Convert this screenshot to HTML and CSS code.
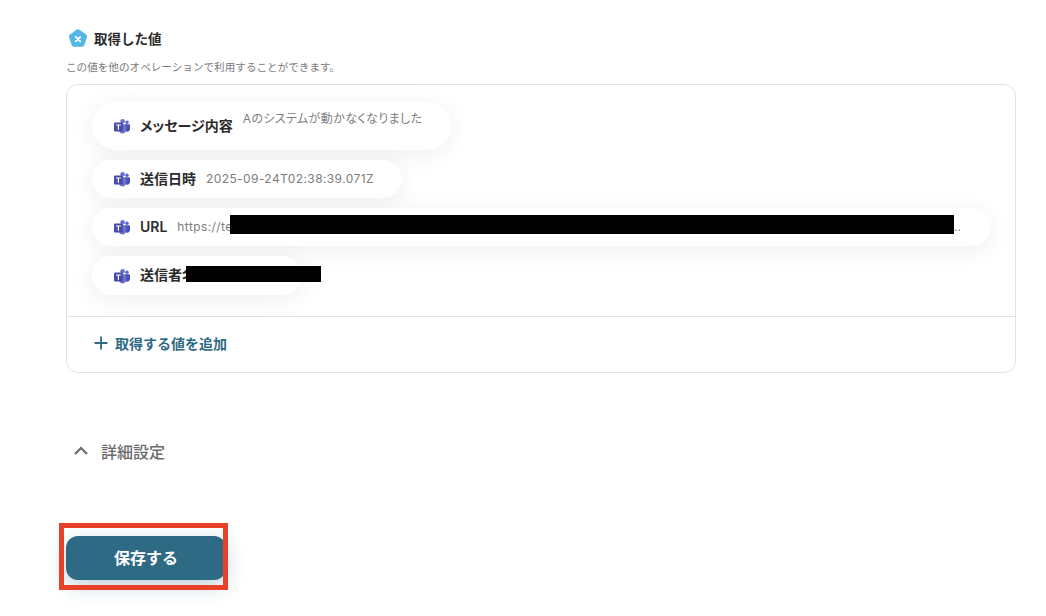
FILE: index.html
```html
<!DOCTYPE html>
<html lang="ja">
<head>
    <meta charset="UTF-8">
    <meta name="viewport" content="width=device-width, initial-scale=1.0">
    <title>取得した値</title>
    <link rel="stylesheet" href="styles.css">
</head>
<body>
    <svg width="0" height="0" class="defs">
        <symbol id="teams" viewBox="0 0 16 16">
            <circle cx="13" cy="4.200" r="1.700" fill="#5f66c4"/>
            <circle cx="8.600" cy="3.200" r="2.300" fill="#6a71cf"/>
            <path d="M11 6.300h4.200c.4 0 .8.400.8.800v4c0 1.500-1.200 2.600-2.600 2.600-.9 0-1.700-.4-2.400-1z" fill="#4a52b5"/>
            <path d="M5 6.300h6.400c.3 0 .6.300.6.600v5.300c0 1.900-1.500 3.300-3.500 3.300-1.900 0-3.500-1.400-3.500-3.300z" fill="#6a71cf"/>
            <rect x="0" y="4.600" width="8.800" height="8.800" rx="1" fill="#454da8"/>
            <path d="M2 6.600h4.800v1H5v4.200H3.800V7.600H2z" fill="#fff"/>
        </symbol>
    </svg>

    <section class="values">
        <div class="values-title">
            <svg class="badge" width="20" height="20" viewBox="0 0 20 20">
                <path d="M8.500 .8a2.500 2.500 0 0 1 3 0l6.500 4.800a2.500 2.500 0 0 1 .9 2.800l-2.500 7.700a2.500 2.500 0 0 1-2.400 1.700H6a2.500 2.500 0 0 1-2.400-1.700L1.100 8.400A2.500 2.500 0 0 1 2 5.600z" fill="#53b7e8"/>
                <path d="M7.800 8l4.400 4.400M12.200 8l-4.400 4.400" stroke="#fff" stroke-width="1.800" stroke-linecap="round"/>
            </svg>
            <h2>取得した値</h2>
        </div>
        <p class="values-note">この値を他のオペレーションで利用することができます。</p>

        <div class="card">
            <div class="pill-list">
                <div class="pill pill-tall">
                    <svg class="teams-icon"><use href="#teams"/></svg>
                    <span class="pill-label">メッセージ内容</span>
                    <span class="pill-value pill-value-raised">Aのシステムが動かなくなりました</span>
                </div>
                <div class="pill pill-date">
                    <svg class="teams-icon"><use href="#teams"/></svg>
                    <span class="pill-label">送信日時</span>
                    <span class="pill-value">2025-09-24T02:38:39.071Z</span>
                </div>
                <div class="pill pill-url">
                    <svg class="teams-icon"><use href="#teams"/></svg>
                    <span class="pill-label">URL</span>
                    <span class="pill-value">https://te</span>
                    <span class="pill-dots">..</span>
                    <div class="redact redact-url"></div>
                </div>
                <div class="pill pill-sender">
                    <svg class="teams-icon"><use href="#teams"/></svg>
                    <span class="pill-label">送信者名</span>
                    <div class="redact redact-sender"></div>
                </div>
            </div>
            <div class="card-footer">
                <svg width="14" height="14" viewBox="0 0 14 14">
                    <path d="M7 .5v13M.5 7h13" stroke="#2f6a85" stroke-width="1.800"/>
                </svg>
                <span>取得する値を追加</span>
            </div>
        </div>
    </section>

    <div class="details">
        <svg width="16" height="10" viewBox="0 0 16 10">
            <path d="M2 8l6-6 6 6" fill="none" stroke="#6b6b6b" stroke-width="2.200"/>
        </svg>
        <span>詳細設定</span>
    </div>

    <div class="save-wrap">
        <button class="save-button">保存する</button>
        <div class="highlight"></div>
    </div>
</body>
</html>
```

FILE: styles.css
```css
body {
    margin: 0;
    padding: 29px 30px 0 66px;
    box-sizing: border-box;
    height: 616px;
    overflow: hidden;
    background-color: #fff;
    font-family: Inter, 'Noto Sans CJK JP', sans-serif;
    color: #2b2b2b;
}

.defs {
    position: absolute;
}

.values-title {
    display: flex;
    align-items: center;
    gap: 6px;
    height: 20px;
    margin-left: 2px;
}

.values-title h2 {
    margin: 0;
    font-size: 13.5px;
    font-weight: 600;
    line-height: 20px;
}

.values-note {
    margin: 11px 0 0;
    font-size: 10.6px;
    line-height: 16px;
    color: #7a7a7a;
}

.card {
    margin-top: 8px;
    width: 950px;
    height: 289px;
    box-sizing: border-box;
    border: 1px solid #e2e2e2;
    border-radius: 12px;
    display: flex;
    flex-direction: column;
}

.pill-list {
    box-sizing: border-box;
    height: 232px;
    padding: 17px 0 0 25px;
    display: flex;
    flex-direction: column;
    align-items: flex-start;
    gap: 10px;
    border-bottom: 1px solid #e2e2e2;
}

.pill {
    position: relative;
    height: 38px;
    box-sizing: border-box;
    padding-left: 22px;
    display: flex;
    align-items: center;
    background-color: #fff;
    border-radius: 24px;
    box-shadow: 0 4px 24px rgba(0, 0, 0, 0.07);
    white-space: nowrap;
}

.pill-tall {
    width: 359px;
    height: 48px;
}

.pill-date {
    width: 310px;
}

.pill-url {
    width: 898px;
}

.pill-sender {
    width: 210px;
    height: 39px;
}

.teams-icon {
    width: 16px;
    height: 16px;
    flex: none;
}

.pill-label {
    margin: 0 0 2px 10px;
    font-size: 14px;
    font-weight: 600;
    font-feature-settings: "palt";
    color: #2b2b2b;
}

.pill-sender .pill-label {
    margin-bottom: 4px;
}

.pill-value {
    margin: 0 0 2px 10px;
    font-size: 12px;
    letter-spacing: 0.4px;
    font-feature-settings: "palt";
    color: #7d7d7d;
}

.pill-value-raised {
    margin-top: -18px;
    margin-bottom: 0;
}

.pill-dots {
    position: absolute;
    left: 862px;
    top: 11px;
    font-size: 12px;
    color: #7d7d7d;
}

.redact {
    position: absolute;
    background-color: #000;
}

.redact-url {
    left: 138px;
    top: 7px;
    width: 724px;
    height: 19px;
}

.redact-sender {
    left: 94px;
    top: 10px;
    width: 135px;
    height: 16px;
}

.card-footer {
    flex: 1;
    padding: 0 0 4px 27px;
    display: flex;
    align-items: center;
    gap: 7px;
    font-size: 14px;
    font-weight: 600;
    color: #2f6a85;
}

.details {
    margin: 67px 0 0 7px;
    height: 22px;
    display: flex;
    align-items: center;
    gap: 12px;
    font-size: 16px;
    font-weight: 500;
    color: #6b6b6b;
}

.save-wrap {
    position: relative;
    margin-top: 74px;
    width: 160px;
}

.save-button {
    display: block;
    width: 160px;
    height: 44px;
    padding: 0 0 2px;
    border: none;
    border-radius: 12px;
    background-color: #2f6a85;
    color: #fff;
    font-family: inherit;
    font-size: 16px;
    font-weight: 600;
    box-shadow: 0 6px 20px rgba(47, 106, 133, 0.3);
}

.highlight {
    position: absolute;
    left: -7px;
    top: -13px;
    width: 169px;
    height: 67px;
    box-sizing: border-box;
    border: 5px solid #e8412a;
}
```
